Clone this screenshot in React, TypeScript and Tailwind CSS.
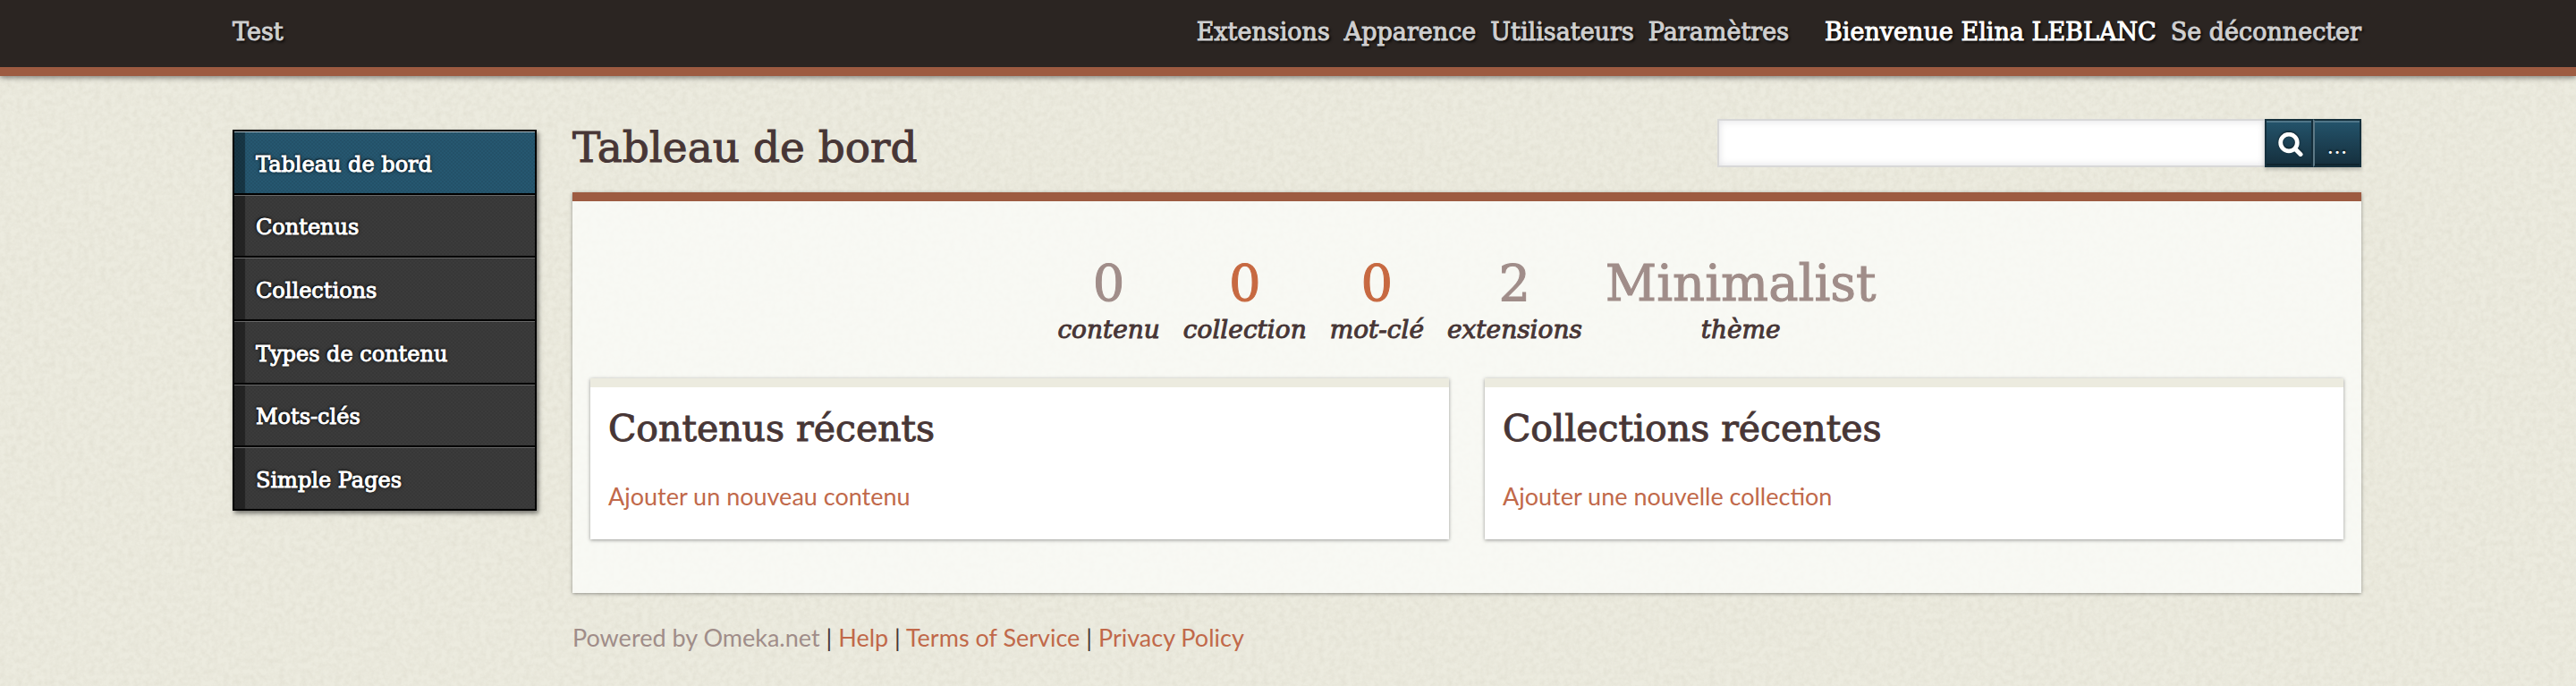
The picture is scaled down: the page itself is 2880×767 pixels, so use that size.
import React from 'react';

const topLinks = ['Extensions', 'Apparence', 'Utilisateurs', 'Paramètres'];

const sections = ['Tableau de bord', 'Contenus', 'Collections', 'Types de contenu', 'Mots-clés', 'Simple Pages'];

const stats = [
  { value: '0', label: 'contenu', active: false },
  { value: '0', label: 'collection', active: true },
  { value: '0', label: 'mot-clé', active: true },
  { value: '2', label: 'extensions', active: false },
  { value: 'Minimalist', label: 'thème', active: false },
];

const panels = [
  { title: 'Contenus récents', link: 'Ajouter un nouveau contenu' },
  { title: 'Collections récentes', link: 'Ajouter une nouvelle collection' },
];

const footerLinks = ['Help', 'Terms of Service', 'Privacy Policy'];

// Slab headings and navigation share one face, thickened slightly.
const slab = "font-['DejaVu_Serif',serif] [-webkit-text-stroke:1px_currentColor]";

function PaperTexture() {
  return (
    <svg className="pointer-events-none absolute inset-0 -z-10 h-full w-full" aria-hidden="true">
      <filter id="paper" x="0" y="0" width="100%" height="100%">
        <feTurbulence type="fractalNoise" baseFrequency="0.16" numOctaves="3" seed="4" stitchTiles="stitch" />
        <feColorMatrix values="0 0 0 0 0.55  0 0 0 0 0.52  0 0 0 0 0.42  0.5 0 0 0 -0.16" />
      </filter>
      <rect width="100%" height="100%" filter="url(#paper)" opacity="0.7" />
    </svg>
  );
}

function Header() {
  return (
    <header
      className={
        slab +
        ' relative flex items-start justify-between border-b-[10px] border-[#9d5b41] bg-[#2b2522] pt-4 pb-[19px] pl-[260px] pr-[240px] text-[27px] leading-10 text-[#cfcfcf] shadow-[0_2px_6px_rgba(0,0,0,0.45)] [text-shadow:2px_2px_3px_#000]'
      }
    >
      <a href="#site">Test</a>
      <nav className="flex gap-10">
        <ul className="flex gap-4">
          {topLinks.map((label) => (
            <li key={label}>
              <a href="#admin">{label}</a>
            </li>
          ))}
        </ul>
        <ul className="flex gap-4">
          <li>
            <a href="#user" className="text-white">Bienvenue Elina LEBLANC</a>
          </li>
          <li>
            <a href="#logout">Se déconnecter</a>
          </li>
        </ul>
      </nav>
    </header>
  );
}

function Sidebar() {
  return (
    <nav className={slab + ' mt-[60px] w-[340px] shrink-0'}>
      <ul className="grid min-h-[426px] auto-rows-fr border-x-2 border-t-2 border-black shadow-[2px_3px_5px_rgba(0,0,0,0.5)]">
        {sections.map((label, i) => (
          <li key={label} className="flex border-b-2 border-black">
            <a
              href="#section"
              aria-current={i === 0 ? 'page' : undefined}
              className={
                (i === 0 ? 'bg-[#265770] border-t-[#a9bac3]' : 'bg-[#3b3b3b] border-t-[#696969]') +
                ' flex flex-1 items-center border-t bg-[repeating-conic-gradient(rgba(0,0,0,0.07)_0_25%,transparent_0_50%)] bg-[length:4px_4px] pt-1 pl-6 text-2xl text-white shadow-[inset_12px_0_1px_rgba(0,0,0,0.38)] [text-shadow:0_0_4px_#000,-1px_-1px_2px_#000]'
              }
            >
              {label}
            </a>
          </li>
        ))}
      </ul>
    </nav>
  );
}

function Search() {
  const button =
    'flex h-[54px] w-[54px] items-center justify-center border-2 border-[#15303d] bg-linear-to-b from-[#24546c] to-[#152f3d] text-white shadow-[inset_0_2px_0_rgba(255,255,255,0.2),inset_0_-2px_0_rgba(0,0,0,0.25),0_3px_4px_rgba(0,0,0,0.2)] [text-shadow:0_-1px_2px_#000]';
  return (
    <form className="flex w-[720px]" onSubmit={(e) => e.preventDefault()}>
      <input
        type="text"
        aria-label="Recherche"
        className="h-[54px] min-w-0 flex-1 border-2 border-r-0 border-[#d8d8d8] bg-white px-3 text-[27px] shadow-[inset_0_0_10px_rgba(0,0,30,0.12)] outline-none"
      />
      <button type="submit" aria-label="Rechercher" className={button + ' pt-1 pl-1'}>
        <svg viewBox="0 0 28 28" className="h-7 w-7 drop-shadow-[0_-1px_1px_#0a1a22]" fill="none" stroke="currentColor">
          <circle cx="12" cy="11.5" r="9.3" strokeWidth="4.8" />
          <path d="M19 18.5 25 24.5" strokeWidth="5" strokeLinecap="round" />
        </svg>
      </button>
      <button type="button" className={button + ' border-l-[#5d7986] pt-2'}>
        <span className="font-['DejaVu_Serif',serif] text-2xl leading-none">...</span>
      </button>
    </form>
  );
}

export default function App() {
  return (
    <div className="relative isolate min-h-screen bg-[#ecebdf] font-['Lato',sans-serif] text-[27px] text-[#473636]">
      <PaperTexture />
      <Header />
      <div className="flex gap-10 pl-[260px] pr-[240px]">
        <Sidebar />
        <div className="min-w-0 flex-1">
          <div className="flex items-start justify-between pt-12">
            <h1 className={slab + ' text-[47px] leading-[64px]'}>Tableau de bord</h1>
            <Search />
          </div>
          <main className="mt-[18px] border-t-[10px] border-[#9d5b41] bg-[#fcfefb]/75 px-5 pt-[60px] pb-[60px] shadow-[0_1px_4px_rgba(0,0,0,0.4)]">
            <dl className={slab + ' flex justify-center gap-[26px]'}>
              {stats.map((s) => (
                <div key={s.label} className="flex flex-col-reverse text-center">
                  <dt className="text-[28px] leading-10 italic">{s.label}</dt>
                  <dd className={(s.active ? 'text-[#c76941]' : 'text-[#a08d89]') + ' text-[56px] leading-[64px]'}>
                    {s.active ? <a href="#browse">{s.value}</a> : s.value}
                  </dd>
                </div>
              ))}
            </dl>
            <div className="mt-[34px] grid grid-cols-2 gap-10">
              {panels.map((p) => (
                <section
                  key={p.title}
                  className="border-t-[10px] border-[#ecebdf] bg-white px-5 pt-5 pb-7 shadow-[0_1px_4px_rgba(0,0,0,0.4)]"
                >
                  <h2 className={slab + ' text-[41px] leading-[52px]'}>{p.title}</h2>
                  <p className="mt-[30px] leading-10 text-[#c1694a]">
                    <a href="#add">{p.link}</a>
                  </p>
                </section>
              ))}
            </div>
          </main>
          <footer className="mt-[30px] pb-6 leading-10 text-[#c1694a]">
            <span className="text-[#a08d89]">Powered by Omeka.net</span>
            {footerLinks.map((label) => (
              <React.Fragment key={label}>
                <span className="text-[#473636]"> | </span>
                <a href="#info">{label}</a>
              </React.Fragment>
            ))}
          </footer>
        </div>
      </div>
    </div>
  );
}
